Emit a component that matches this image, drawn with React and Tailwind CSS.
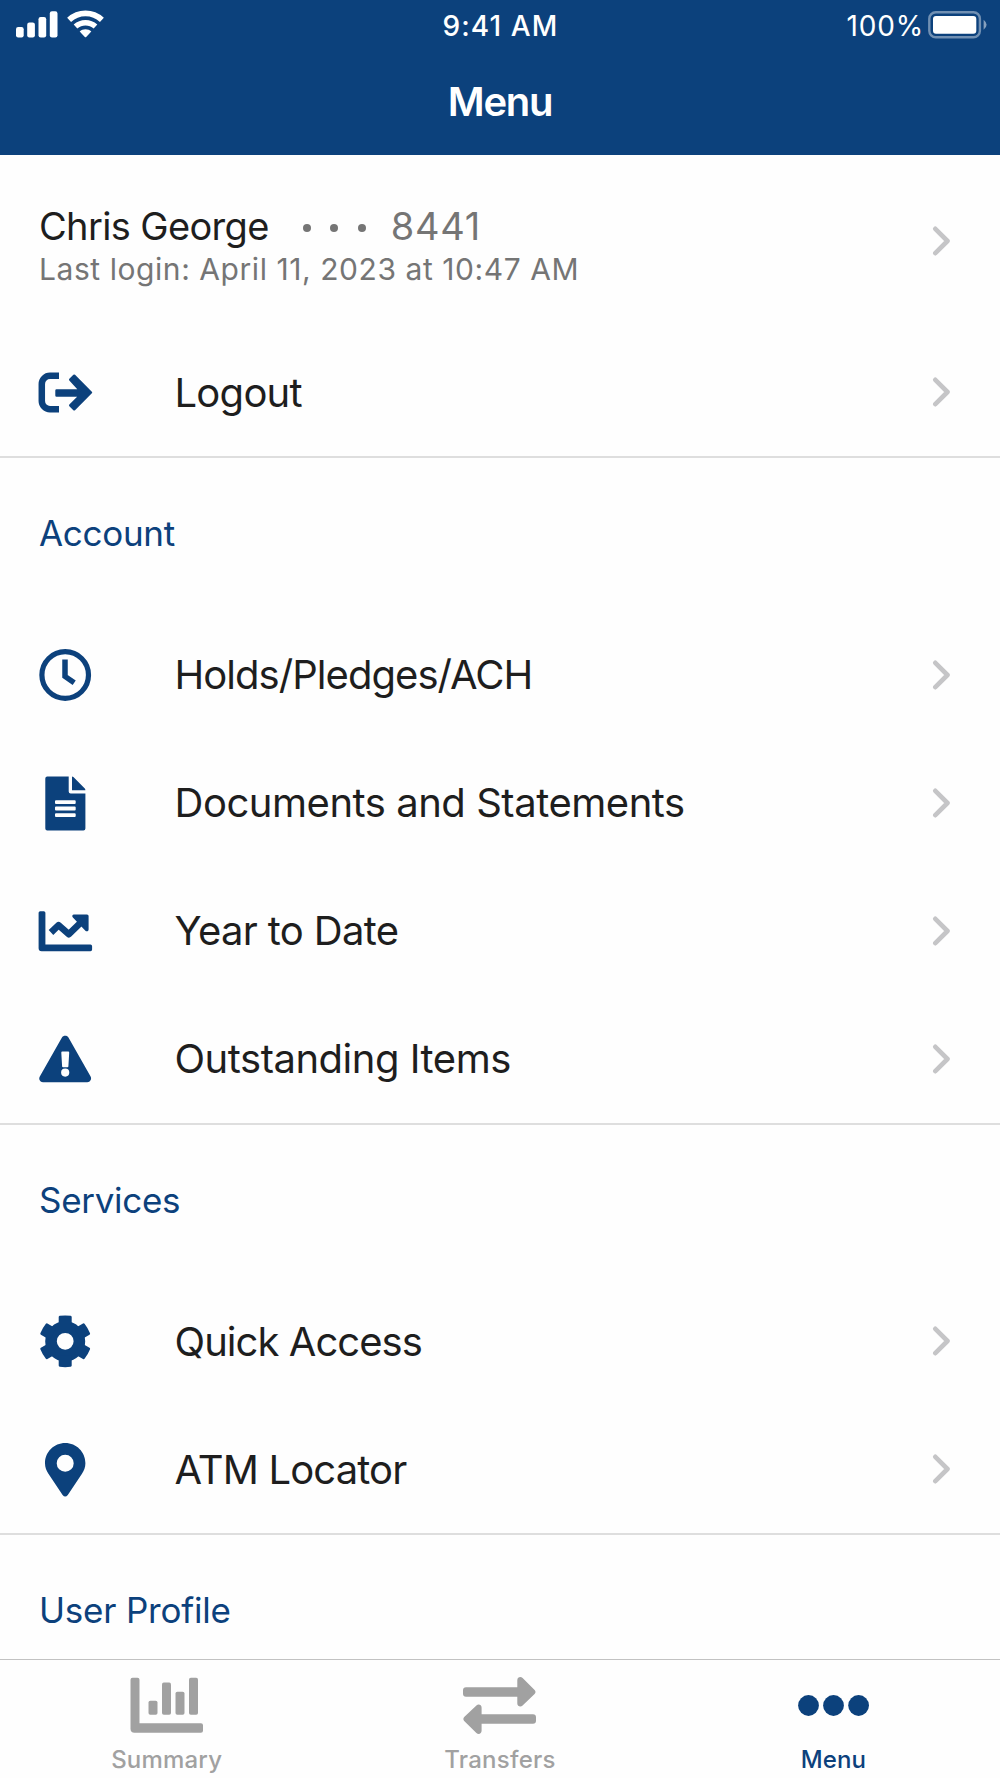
import React from 'react';

const LogoutIcon = () => (
  <svg viewBox="0 0 60 60" className="w-[60px] h-[60px]" fill="currentColor">
    <path d="M24 13.8H15a8.2 8.2 0 0 0-8.2 8.2v17a8.2 8.2 0 0 0 8.2 8.2h9" fill="none" stroke="currentColor" strokeWidth="6.5" />
    <path d="M21.5 28.5H45L35.2 17.6l4-3.9L56 30.5 39.2 47.3l-4-3.9L45 33.5H21.5z" stroke="currentColor" strokeWidth="2.4" strokeLinejoin="round" />
  </svg>
);

const ClockIcon = () => (
  <svg viewBox="0 0 60 60" className="w-[60px] h-[60px]" fill="none" stroke="currentColor">
    <circle cx="30.2" cy="30" r="23.3" strokeWidth="5.2" />
    <path d="M30 14.5V31.4L39.2 37.7" strokeWidth="5.5" />
  </svg>
);

const DocumentIcon = () => (
  <svg viewBox="0 0 60 60" className="w-[60px] h-[60px]" fill="currentColor">
    <path fillRule="evenodd" d="M12.3 3.5H33.7V18.5a2 2 0 0 0 2 2H50.4V55.5a2 2 0 0 1-2 2H12.3a2 2 0 0 1-2-2V5.5a2 2 0 0 1 2-2zM21 27.2a1 1 0 0 0-1 1v1.8a1 1 0 0 0 1 1H39.7a1 1 0 0 0 1-1v-1.8a1 1 0 0 0-1-1zM21 33.6a1 1 0 0 0-1 1v1.9a1 1 0 0 0 1 1H39.7a1 1 0 0 0 1-1v-1.9a1 1 0 0 0-1-1zM21 40.2a1 1 0 0 0-1 1v1.9a1 1 0 0 0 1 1H39.7a1 1 0 0 0 1-1v-1.9a1 1 0 0 0-1-1z" />
    <path d="M37 3.5q.8 0 1.4.6L49.8 15.6q.6.6.6 1.6H37z" />
  </svg>
);

const LineChartIcon = () => (
  <svg viewBox="0 0 60 60" className="w-[60px] h-[60px]" fill="currentColor">
    <path d="M5.2 10.2H8.8a1.6 1.6 0 0 1 1.6 1.6V43.6H55.5a1.6 1.6 0 0 1 1.6 1.6v3.4a1.6 1.6 0 0 1-1.6 1.6H6.6a3 3 0 0 1-3-3V11.8a1.6 1.6 0 0 1 1.6-1.6z" />
    <path d="M16 31.5L23.6 24.2 33.9 33.2 46.5 20.8" fill="none" stroke="currentColor" strokeWidth="6.6" strokeLinejoin="round" />
    <path d="M39 13.5H52a1.6 1.6 0 0 1 1.6 1.6V28.4c0 1.8-2 2.6-3.2 1.4L37.9 16.6C36.6 15.3 37.4 13.5 39 13.5z" />
  </svg>
);

const WarningIcon = () => (
  <svg viewBox="0 0 60 60" className="w-[60px] h-[60px]" fill="currentColor">
    <path fillRule="evenodd" d="M26.8 8.7C28.3 6.2 32.1 6.2 33.6 8.7L55.6 47.6C57 50.2 55.2 53.3 52.3 53.3H8C5.1 53.3 3.3 50.2 4.8 47.6zM27.3 22.6a1 1 0 0 0-1 1.1l.8 13.5a1 1 0 0 0 1 1h4.3a1 1 0 0 0 1-1l.8-13.5a1 1 0 0 0-1-1.1zM30.2 39.5a4.1 4.1 0 1 0 0 8.2 4.1 4.1 0 0 0 0-8.2z" />
  </svg>
);

const GearIcon = () => (
  <svg viewBox="0 0 60 60" className="w-[60px] h-[60px]" fill="currentColor">
    <circle cx="30.2" cy="30.3" r="14.2" fill="none" stroke="currentColor" strokeWidth="11.6" />
    {['rotate(0 30.2 30.3)', 'rotate(60 30.2 30.3)', 'rotate(120 30.2 30.3)', 'rotate(180 30.2 30.3)', 'rotate(240 30.2 30.3)', 'rotate(300 30.2 30.3)'].map((t) => (
      <path key={t} transform={t} d="M23.7 16V6q0-1 1-1.2 5.5-.8 11 0 1 .2 1 1.2V16z" />
    ))}
  </svg>
);

const PinIcon = () => (
  <svg viewBox="0 0 60 60" className="w-[60px] h-[60px]" fill="currentColor">
    <path fillRule="evenodd" d="M30.2 4C19 4 10 13 10 24.2c0 4.3 1.4 7.5 3.6 10.9L27.6 56q2.6 3 5.2 0L46.8 35.1c2.2-3.4 3.6-6.6 3.6-10.9C50.4 13 41.4 4 30.2 4zM30.2 15.8a8.5 8.5 0 1 0 0 17 8.5 8.5 0 0 0 0-17z" />
  </svg>
);

const SummaryIcon = () => (
  <svg viewBox="0 0 73 57" className="w-[73px] h-[57px]" fill="currentColor">
    <path d="M2.5 .8H7.5a2 2 0 0 1 2 2V46.2H71a2 2 0 0 1 2 2v5.6a2 2 0 0 1-2 2H4.5a4 4 0 0 1-4-4V2.8a2 2 0 0 1 2-2z" />
    <rect x="18.5" y="23.8" width="9" height="14" rx="1.8" />
    <rect x="32" y="5.6" width="9" height="32.2" rx="1.8" />
    <rect x="45.5" y="14.8" width="9" height="23" rx="1.8" />
    <rect x="59" y=".8" width="9" height="37" rx="1.8" />
  </svg>
);

const TransfersIcon = () => (
  <svg viewBox="0 0 73 57" className="w-[73px] h-[57px]" fill="currentColor">
    <path d="M3 10.3H54.3V3.2C54.3.3 57.6-.9 59.6 1.1L71.6 13Q73.4 15 71.6 17L59.6 28.6C57.6 30.6 54.3 29.4 54.3 26.5V19.7H3a3 3 0 0 1-3-3V13.3a3 3 0 0 1 3-3z" />
    <path d="M70 46.7H18.6V53.8C18.6 56.7 15.4 57.9 13.4 55.9L1.2 44Q-.5 42 1.2 40L13.4 28.4C15.4 26.4 18.6 27.6 18.6 30.5V37.3H70a3 3 0 0 1 3 3V43.7a3 3 0 0 1-3 3z" />
  </svg>
);

const DotsIcon = () => (
  <svg viewBox="0 0 73 57" className="w-[73px] h-[57px]" fill="currentColor">
    <circle cx="11.5" cy="28.5" r="10.4" />
    <circle cx="36.5" cy="28.5" r="10.4" />
    <circle cx="61.6" cy="28.5" r="10.4" />
  </svg>
);

const Chevron = () => (
  <svg viewBox="0 0 18 30" className="w-[18px] h-[30px] shrink-0" fill="none" stroke="#c5c5c7" strokeWidth="4.6" strokeLinecap="round" strokeLinejoin="round">
    <path d="M3.3 2.8L15.5 15 3.3 27.2" />
  </svg>
);

const MenuRow = ({ icon: Icon, label, tracking }) => (
  <a href="#" className="flex h-32 items-center pl-[35px] pr-[50px] text-[#0c417c]">
    <Icon />
    <span className={`ml-[79.5px] flex-1 pt-px text-[40px] leading-none whitespace-nowrap text-[#1e1e1e] ${tracking}`}>{label}</span>
    <Chevron />
  </a>
);

const SectionTitle = ({ children, tracking }) => (
  <h2 className={`flex h-[152.5px] shrink-0 items-center pb-px pl-[39px] text-[35px] leading-none text-[#0c417c] ${tracking}`}>{children}</h2>
);

const StatusBar = () => (
  <div className="grid h-[51px] grid-cols-3 items-center pl-4 pr-[13px] text-[28px] leading-none">
    <div className="flex items-center gap-[9px] pb-[3px]">
      <svg viewBox="0 0 42 28" className="w-[42px] h-7" fill="#fff">
        <rect x="0" y="17" width="7.7" height="10.5" rx="2.2" />
        <rect x="11.2" y="12.5" width="7.7" height="15" rx="2.2" />
        <rect x="22.5" y="7" width="7.7" height="20.5" rx="2.2" />
        <rect x="33.8" y="1.2" width="7.7" height="26.3" rx="2.2" />
      </svg>
      <svg viewBox="0 0 37 28" className="w-[37px] h-7" fill="none" stroke="#fff">
        <path d="M2.1 9.8C11.5 1.2 25.5 1.2 34.9 9.8" strokeWidth="5.8" />
        <path d="M8.5 16.6C14.2 11.4 22.8 11.4 28.5 16.6" strokeWidth="5.4" />
        <path d="M12.7 21.4C15.8 18.6 21.2 18.6 24.3 21.4L19.2 26.9Q18.5 27.6 17.8 26.9z" fill="#fff" stroke="none" />
      </svg>
    </div>
    <span className="pr-[2px] text-center font-medium tracking-[1.1px]">9:41 AM</span>
    <div className="flex items-center justify-end gap-1">
      <span className="tracking-[0.8px]">100%</span>
      <svg viewBox="0 0 59 28" className="w-[59px] h-7 -mt-[2px]">
        <rect x="1.3" y="1.3" width="50.6" height="25" rx="6.5" fill="none" stroke="#fff" strokeOpacity=".42" strokeWidth="2.4" />
        <rect x="5" y="5" width="43.3" height="17.8" rx="3" fill="#fff" />
        <path d="M55.6 8.8q6 5 0 10z" fill="#fff" fillOpacity=".5" />
      </svg>
    </div>
  </div>
);

const Tab = ({ icon: Icon, label, color, tracking }) => (
  <a href="#" className={`flex flex-col items-center pt-[17px] ${color}`}>
    <Icon />
    <span className={`mt-[13px] text-2xl leading-[26px] font-medium ${tracking}`}>{label}</span>
  </a>
);

const account = [
  { icon: ClockIcon, label: 'Holds/Pledges/ACH', tracking: 'tracking-[-0.95px]' },
  { icon: DocumentIcon, label: 'Documents and Statements', tracking: 'tracking-[-0.47px]' },
  { icon: LineChartIcon, label: 'Year to Date', tracking: 'tracking-[-0.65px]' },
  { icon: WarningIcon, label: 'Outstanding Items', tracking: 'tracking-[-0.48px]' },
];

const services = [
  { icon: GearIcon, label: 'Quick Access', tracking: 'tracking-[-0.95px]' },
  { icon: PinIcon, label: 'ATM Locator', tracking: 'tracking-[-0.87px]' },
];

export default function App() {
  return (
    <div className="flex h-[1778px] w-[1000px] flex-col overflow-hidden bg-[#fefefe] font-['Inter',sans-serif]">
      <header className="h-[155px] shrink-0 bg-[#0c417c] text-white">
        <StatusBar />
        <h1 className="flex h-[102px] items-center justify-center text-[40px] leading-none font-semibold tracking-[-1.3px]">Menu</h1>
      </header>

      <main className="flex min-h-0 flex-1 flex-col overflow-hidden">
        <section className="shrink-0 border-b-2 border-[#dedede]">
          <a href="#" className="flex h-[173px] items-center pb-0.5 pl-[39px] pr-[50px]">
            <div className="flex-1 pt-3 text-[#757575]">
              <div className="flex items-center text-[38px] leading-[44px]">
                <span className="tracking-[-0.65px] text-[#1e1e1e]">Chris George</span>
                <span className="ml-[34px] mt-[3px] flex gap-[19.5px]">
                  <i className="size-2 rounded-full bg-[#757575]"></i>
                  <i className="size-2 rounded-full bg-[#757575]"></i>
                  <i className="size-2 rounded-full bg-[#757575]"></i>
                </span>
                <span className="ml-[25px] tracking-[0.7px]">8441</span>
              </div>
              <div className="pt-px text-[30px] leading-[40px] tracking-[0.56px]">Last login: April 11, 2023 at 10:47 AM</div>
            </div>
            <Chevron />
          </a>
          <MenuRow icon={LogoutIcon} label="Logout" tracking="tracking-[-0.75px]" />
        </section>

        <section className="shrink-0 border-b-2 border-[#dedede]">
          <SectionTitle tracking="tracking-[-0.3px]">Account</SectionTitle>
          {account.map((item) => (
            <MenuRow key={item.label} {...item} />
          ))}
        </section>

        <section className="shrink-0 border-b-2 border-[#dedede]">
          <SectionTitle tracking="tracking-[-0.3px]">Services</SectionTitle>
          {services.map((item) => (
            <MenuRow key={item.label} {...item} />
          ))}
        </section>

        <section className="shrink-0">
          <SectionTitle tracking="tracking-[-0.2px]">User Profile</SectionTitle>
        </section>
      </main>

      <nav className="grid h-[119px] shrink-0 grid-cols-3 border-t border-[#c2c2c2] bg-[#fefefe]">
        <Tab icon={SummaryIcon} label="Summary" color="text-[#a1a1a1]" tracking="tracking-[0.2px]" />
        <Tab icon={TransfersIcon} label="Transfers" color="text-[#a1a1a1]" tracking="tracking-[0.25px]" />
        <Tab icon={DotsIcon} label="Menu" color="text-[#0c417c]" tracking="tracking-[0.1px]" />
      </nav>
    </div>
  );
}
